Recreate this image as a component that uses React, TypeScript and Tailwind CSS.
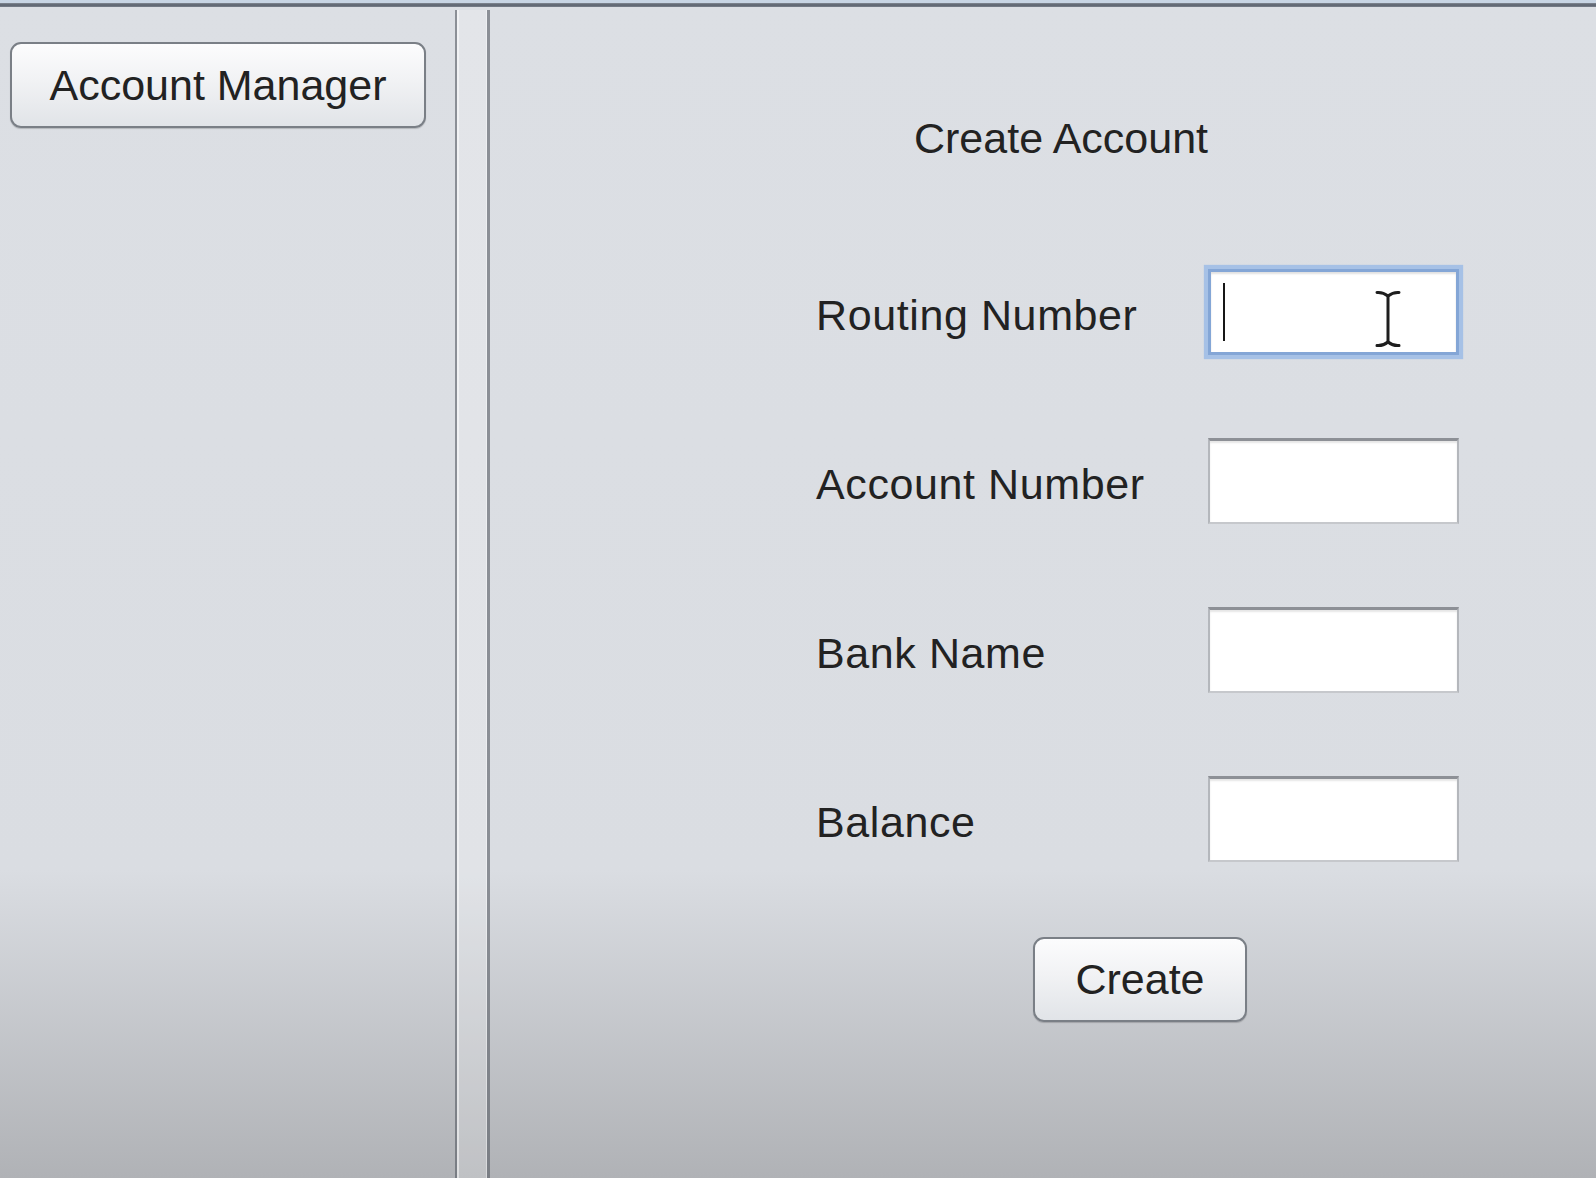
import React from "react";

function Field({ focused = false }: { focused?: boolean }) {
  if (focused) {
    return (
      <div className="relative w-[251px] h-[86px] bg-white border-[3px] border-[#84a6d6] shadow-[0_0_1px_4px_#a6c1e6]">
        <div className="absolute inset-0 shadow-[inset_0_2px_2px_rgba(0,0,0,0.12)]" />
        <div className="absolute left-[12px] top-[11px] w-[2px] h-[58px] bg-[#161616]" />
        <svg
          className="absolute left-[164px] top-[18px]"
          width="26"
          height="58"
          viewBox="0 0 26 58"
          fill="none"
          stroke="#1e1e1e"
          strokeWidth="3"
          strokeLinecap="round"
        >
          <path d="M2 2.5 Q8 2 13 6 Q18 2 24 2.5" />
          <path d="M13 6 V52" />
          <path d="M2 55.5 Q8 56 13 52 Q18 56 24 55.5" />
        </svg>
      </div>
    );
  }
  return (
    <div className="relative w-[251px] h-[86px] bg-white border-2 border-t-[3px] border-[#b4b7bc] border-t-[#8d9096] border-b-[#c6c8cc]">
      <div className="absolute inset-0 shadow-[inset_0_2px_2px_rgba(0,0,0,0.10)]" />
    </div>
  );
}

function Row({ label, focused = false }: { label: string; focused?: boolean }) {
  return (
    <div className="flex items-center h-[86px] ml-[326px]">
      <div className="w-[392px] pt-[6px] text-[43px] leading-none tracking-[0.6px] text-[#222222] whitespace-nowrap">
        {label}
      </div>
      <Field focused={focused} />
    </div>
  );
}

export default function App() {
  return (
    <div
      className="h-screen w-full flex flex-col overflow-hidden bg-[linear-gradient(to_bottom,#dcdfe4_0px,#dadde2_870px,#b0b2b6_1178px)]"
      style={{ fontFamily: '"Liberation Sans", Arial, sans-serif' }}
    >
      <div className="h-[3px] bg-[#c8d5e4]" />
      <div className="h-[4px] bg-[linear-gradient(to_bottom,#838a95,#5a616d,#7a818c)]" />
      <div className="flex flex-1">
        {/* Left panel */}
        <div className="w-[455px] pt-[35px] pl-[10px]">
          <button className="w-[416px] h-[86px] rounded-[11px] border-2 border-[#7a7f86] bg-[linear-gradient(to_bottom,#fcfcfd,#f1f2f4_45%,#e1e4e8)] shadow-[0_1px_1px_rgba(0,0,0,0.18)] text-[43px] leading-none text-[#222222] flex items-center justify-center">
            Account Manager
          </button>
        </div>

        {/* Split pane divider */}
        <div className="w-[35px] mt-[3px] flex">
          <div className="w-[2px] bg-[rgba(85,90,98,0.6)]" />
          <div className="w-[2px] bg-white/60" />
          <div className="flex-1 bg-white/20" />
          <div className="w-[1px] bg-white/50" />
          <div className="w-[3px] bg-[rgba(85,90,98,0.6)]" />
        </div>

        {/* Right panel */}
        <div className="flex-1 flex flex-col">
          <div className="mt-[110px] ml-[424px] text-[43px] leading-none text-[#222222] whitespace-nowrap">
            Create Account
          </div>
          <div className="mt-[109px] flex flex-col gap-[83px]">
            <Row label="Routing Number" focused />
            <Row label="Account Number" />
            <Row label="Bank Name" />
            <Row label="Balance" />
          </div>
          <div className="mt-[75px] ml-[543px]">
            <button className="w-[214px] h-[85px] rounded-[11px] border-2 border-[#7a7f86] bg-[linear-gradient(to_bottom,#fcfcfd,#f1f2f4_45%,#e1e4e8)] shadow-[0_1px_1px_rgba(0,0,0,0.18)] text-[43px] leading-none text-[#222222] flex items-center justify-center">
              Create
            </button>
          </div>
        </div>
      </div>
    </div>
  );
}
